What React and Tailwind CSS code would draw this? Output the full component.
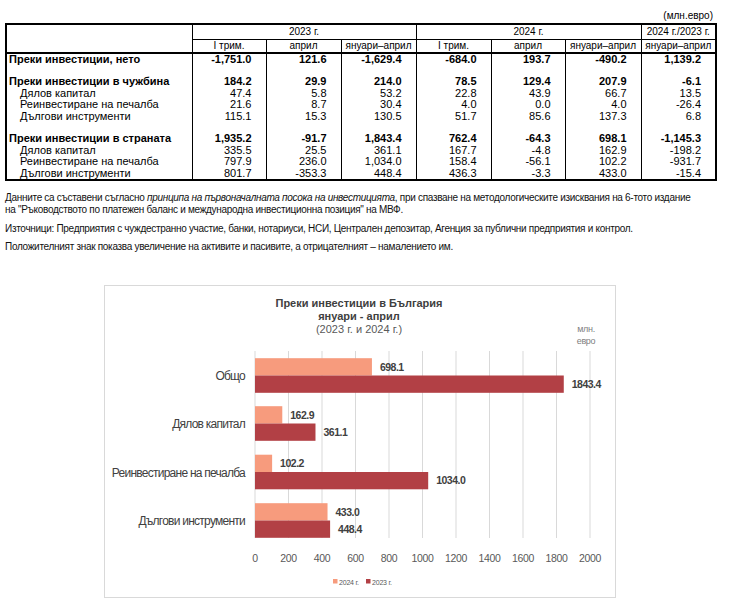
import React from "react";

const rows = [
  { label: "Преки инвестиции, нето", bold: true, v: ["-1,751.0", "121.6", "-1,629.4", "-684.0", "193.7", "-490.2", "1,139.2"] },
  { blank: true },
  { label: "Преки инвестиции в чужбина", bold: true, v: ["184.2", "29.9", "214.0", "78.5", "129.4", "207.9", "-6.1"] },
  { label: "Дялов капитал", v: ["47.4", "5.8", "53.2", "22.8", "43.9", "66.7", "13.5"] },
  { label: "Реинвестиране на печалба", v: ["21.6", "8.7", "30.4", "4.0", "0.0", "4.0", "-26.4"] },
  { label: "Дългови инструменти", v: ["115.1", "15.3", "130.5", "51.7", "85.6", "137.3", "6.8"] },
  { blank: true },
  { label: "Преки инвестиции в страната", bold: true, v: ["1,935.2", "-91.7", "1,843.4", "762.4", "-64.3", "698.1", "-1,145.3"] },
  { label: "Дялов капитал", v: ["335.5", "25.5", "361.1", "167.7", "-4.8", "162.9", "-198.2"] },
  { label: "Реинвестиране на печалба", v: ["797.9", "236.0", "1,034.0", "158.4", "-56.1", "102.2", "-931.7"] },
  { label: "Дългови инструменти", v: ["801.7", "-353.3", "448.4", "436.3", "-3.3", "433.0", "-15.4"] },
];

const colW = [186, 74, 75, 75, 75, 74, 76, 75];

const chartData = [
  { label: "Общо", a: 698.1, b: 1843.4, cy: 89.5 },
  { label: "Дялов капитал", a: 162.9, b: 361.1, cy: 137.5 },
  { label: "Реинвестиране на печалба", a: 102.2, b: 1034.0, cy: 186 },
  { label: "Дългови инструменти", a: 433.0, b: 448.4, cy: 234.5 },
];

function Chart() {
  const x0 = 150;
  const k = 335 / 2000;
  const bh = 17.3;
  const font = "'Liberation Sans', Arial, sans-serif";
  return (
    <svg width="512" height="313" className="block">
      <g fontFamily={font} fill="#404040" textAnchor="middle">
        <text x="254" y="20.5" fontSize="11" fontWeight="700">Преки инвестиции в България</text>
        <text x="254" y="34" fontSize="11" fontWeight="700">януари - април</text>
        <text x="254" y="47" fontSize="11" fill="#595959">(2023 г. и 2024 г.)</text>
      </g>
      <g fontFamily={font} fill="#7f7f7f" fontSize="9" textAnchor="middle" letterSpacing="-0.3">
        <text x="481" y="46">млн.</text>
        <text x="481" y="57.5">евро</text>
      </g>
      {Array.from({ length: 11 }).map((_, i) => (
        <g key={i}>
          <line x1={x0 + i * 33.5} x2={x0 + i * 33.5} y1="65" y2="252" stroke="#d9d9d9" strokeWidth="1" />
          <text x={x0 + i * 33.5} y="276" fontSize="10.5" fontFamily={font} fill="#595959" textAnchor="middle" letterSpacing="-0.3">{i * 200}</text>
        </g>
      ))}
      {chartData.map((d) => (
        <g key={d.label}>
          <rect x={x0} y={d.cy - bh} width={d.a * k} height={bh} fill="#F79B7D" />
          <rect x={x0} y={d.cy} width={d.b * k} height={bh} fill="#B24045" />
          <text x={x0 + d.a * k + 8} y={d.cy - bh / 2 + 3.8} fontSize="10.5" fontWeight="700" fontFamily={font} fill="#404040" letterSpacing="-0.5">{d.a.toFixed(1)}</text>
          <text x={x0 + d.b * k + 8} y={d.cy + bh / 2 + 3.8} fontSize="10.5" fontWeight="700" fontFamily={font} fill="#404040" letterSpacing="-0.5">{d.b.toFixed(1)}</text>
          <text x="140" y={d.cy + 4.5} fontSize="12" fontFamily={font} fill="#404040" textAnchor="end" letterSpacing="-0.75">{d.label}</text>
        </g>
      ))}
      <g fontFamily={font} fontSize="7" fill="#595959" letterSpacing="-0.2">
        <rect x="228" y="293" width="4.5" height="4.5" fill="#F79B7D" />
        <text x="234" y="298.5">2024 г.</text>
        <rect x="261" y="293" width="4.5" height="4.5" fill="#B24045" />
        <text x="267" y="298.5">2023 г.</text>
      </g>
    </svg>
  );
}

export default function App() {
  return (
    <div className="w-[740px] h-[601px] bg-white text-black overflow-hidden font-['Liberation_Sans',Arial,sans-serif]">
      {/* таблица */}
      <div className="pl-[5px] pt-[10px]">
        <div className="w-[710px] text-right text-[10px] leading-[12px] pr-[2px] h-[13px]">(млн.евро)</div>
        <table className="table-fixed border-collapse border-2 border-black w-[710px]">
          <colgroup>
            {colW.map((w, i) => (
              <col key={i} style={{ width: w }} />
            ))}
          </colgroup>
          <thead className="text-[10px] leading-[12px]">
            <tr className="h-[15px]">
              <th className="border-r border-black"></th>
              <th colSpan={3} className="font-normal border-r border-b border-black">2023 г.</th>
              <th colSpan={3} className="font-normal border-r border-b border-black">2024 г.</th>
              <th className="font-normal border-b border-black">2024 г./2023 г.</th>
            </tr>
            <tr className="h-[13px] border-b-2 border-black">
              <th className="border-r border-black"></th>
              <th className="font-normal border-r border-black">I трим.</th>
              <th className="font-normal border-r border-black">април</th>
              <th className="font-normal border-r border-black whitespace-nowrap">януари–април</th>
              <th className="font-normal border-r border-black">I трим.</th>
              <th className="font-normal border-r border-black">април</th>
              <th className="font-normal border-r border-black whitespace-nowrap">януари–април</th>
              <th className="font-normal whitespace-nowrap">януари–април</th>
            </tr>
          </thead>
          <tbody className="text-[11px] leading-[11.4px]">
            {rows.map((r, i) =>
              r.blank ? (
                <tr key={i} className="h-[11.4px]">
                  {colW.map((_, j) => (
                    <td key={j} className={j < 7 ? "border-r border-black" : ""}></td>
                  ))}
                </tr>
              ) : (
                <tr key={i} className={`h-[11.4px] ${r.bold ? "font-bold" : ""}`}>
                  <td className={`border-r border-black whitespace-nowrap ${r.bold ? "pl-[2px]" : "pl-[13px]"}`}>{r.label}</td>
                  {r.v.map((v, j) => (
                    <td key={j} className={`text-right pr-[14px] ${j < 6 ? "border-r border-black" : ""}`}>{v}</td>
                  ))}
                </tr>
              )
            )}
          </tbody>
        </table>
      </div>

      {/* бележки */}
      <div className="pl-[5px] pt-[11px] text-[10px] leading-[12.5px] text-[#111] tracking-[-0.3px]">
        <p>
          Данните са съставени съгласно <i>принципа на първоначалната посока на инвестицията</i>, при спазване на методологическите изисквания на 6-тото издание
          <br />
          на "Ръководството по платежен баланс и международна инвестиционна позиция" на МВФ.
        </p>
        <p className="mt-[6px]">Източници: Предприятия с чуждестранно участие, банки, нотариуси, НСИ, Централен депозитар, Агенция за публични предприятия и контрол.</p>
        <p className="mt-[6px]">Положителният знак показва увеличение на активите и пасивите, а отрицателният – намалението им.</p>
      </div>

      {/* графика */}
      <div className="ml-[104px] mt-[31px] w-[512px] h-[313px] border border-[#d9d9d9]">
        <Chart />
      </div>
    </div>
  );
}
